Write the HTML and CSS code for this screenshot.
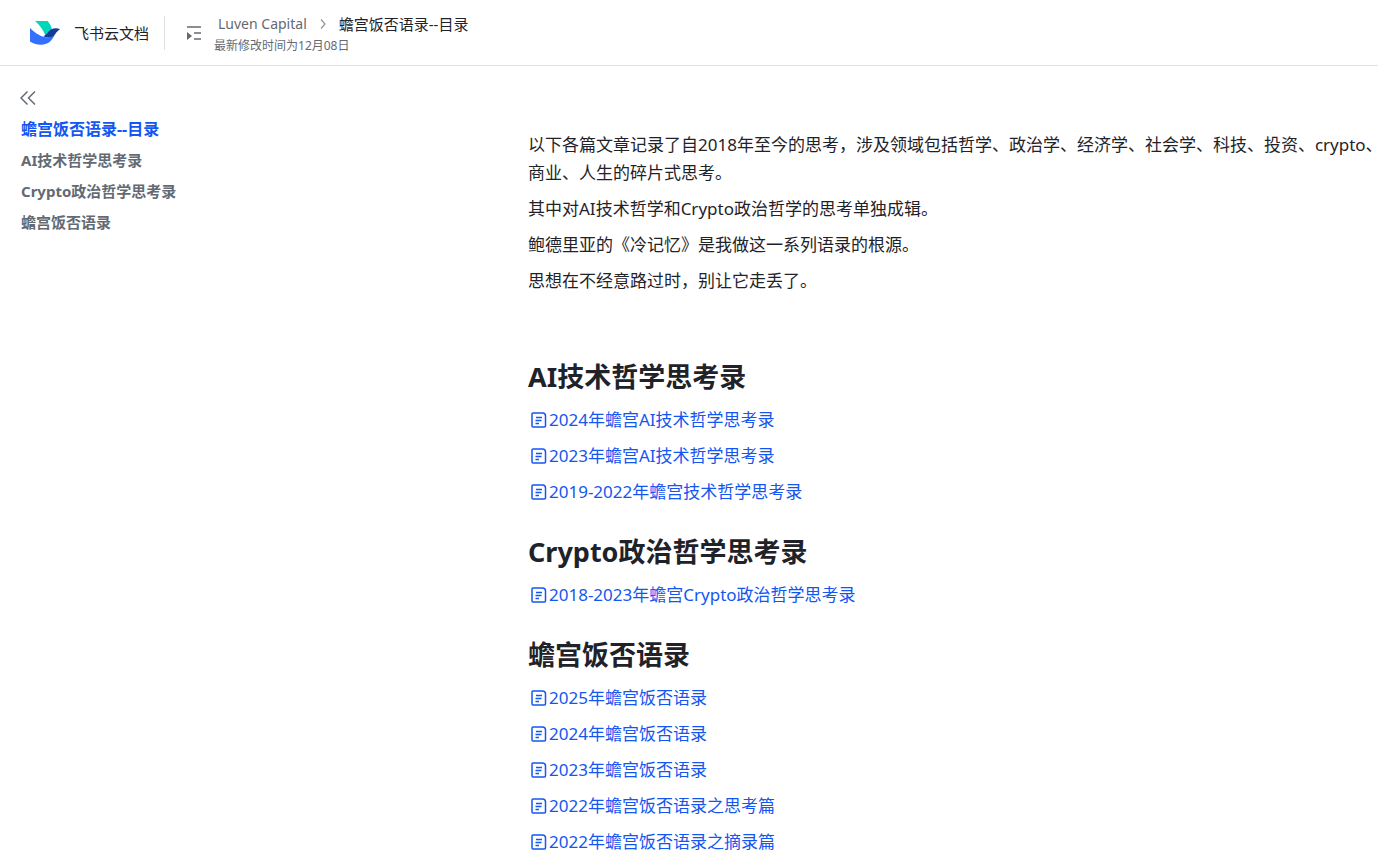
FILE: index.html
```html
<!DOCTYPE html>
<html lang="zh-CN">
<head>
    <meta charset="UTF-8">
    <meta name="viewport" content="width=device-width, initial-scale=1.0">
    <title>蟾宫饭否语录--目录</title>
    <link rel="stylesheet" href="styles.css">
</head>
<body>
    <!-- shared icon for the document links -->
    <svg class="sprite" aria-hidden="true">
        <symbol id="doc" viewBox="0 0 16 16">
            <path d="M2 1h9.500Q14.500 1 14.500 4v10q0 1-1 1H2q-1 0-1-1V2q0-1 1-1zM5 5.500h6M4.500 8.500h6M4.500 11.500h3.500" fill="none" stroke="currentColor" stroke-width="1.500" stroke-linejoin="round"/>
        </symbol>
    </svg>

    <header class="header">
        <a class="brand" href="#">
            <svg class="logo" viewBox="0 0 30 24" aria-hidden="true">
                <path d="M5 0h12.500c2 2 3.800 5 4.500 8.300L15.500 14.500C13 8.500 9.500 4 5 0z" fill="#00d6b9"/>
                <path d="M0 7c5.500 5.500 12 9.500 18 9.500 3 0 5-1 6.500-2.500C22 20 17.500 23.800 11 23.800 6.500 23.800 2.500 22.300 0 20.500z" fill="#3370ff"/>
                <path d="M30 8c-5.500-1.500-9.500-.5-13 4.500l-3.500 3c4.500 1.800 9 1.500 11.500-2C26.500 11 28 9.500 30 8z" fill="#133c9a"/>
            </svg>
            <span>飞书云文档</span>
        </a>
        <button class="icon-btn" aria-label="目录树">
            <svg width="16" height="16" viewBox="0 0 16 16" aria-hidden="true">
                <path d="M1 2h14M8 8h7M8 14h7" fill="none" stroke="currentColor" stroke-width="1.500"/>
                <path d="M1 7l5 4-5 4z" fill="currentColor"/>
            </svg>
        </button>
        <div class="info">
            <nav class="crumbs">
                <a class="parent" href="#">Luven Capital</a>
                <svg width="8" height="12" viewBox="0 0 8 12" aria-hidden="true">
                    <path d="M2 1.500L6 6l-4 4.500" fill="none" stroke="#8f959e" stroke-width="1.200"/>
                </svg>
                <span class="current">蟾宫饭否语录--目录</span>
            </nav>
            <div class="modified">最新修改时间为12月08日</div>
        </div>
    </header>

    <div class="layout">
        <aside class="sidebar">
            <button class="icon-btn" aria-label="收起目录">
                <svg width="16" height="16" viewBox="0 0 16 16" aria-hidden="true">
                    <path d="M7.500 1.500L1 8l6.500 6.500M15 1.500L8.500 8l6.500 6.500" fill="none" stroke="currentColor" stroke-width="1.500"/>
                </svg>
            </button>
            <nav class="toc">
                <a class="toc-title" href="#top">蟾宫饭否语录--目录</a>
                <a href="#ai">AI技术哲学思考录</a>
                <a href="#crypto">Crypto政治哲学思考录</a>
                <a href="#fanfou">蟾宫饭否语录</a>
            </nav>
        </aside>

        <main class="doc" id="top">
            <p>以下各篇文章记录了自2018年至今的思考，涉及领域包括哲学、政治学、经济学、社会学、科技、投资、crypto、商业、人生的碎片式思考。</p>
            <p>其中对AI技术哲学和Crypto政治哲学的思考单独成辑。</p>
            <p>鲍德里亚的《冷记忆》是我做这一系列语录的根源。</p>
            <p>思想在不经意路过时，别让它走丢了。</p>
            <p><br></p>

            <h2 id="ai">AI技术哲学思考录</h2>
            <p><a href="#"><svg class="doc-icon"><use href="#doc"/></svg>2024年蟾宫AI技术哲学思考录</a></p>
            <p><a href="#"><svg class="doc-icon"><use href="#doc"/></svg>2023年蟾宫AI技术哲学思考录</a></p>
            <p><a href="#"><svg class="doc-icon"><use href="#doc"/></svg>2019-2022年蟾宫技术哲学思考录</a></p>

            <h2 id="crypto">Crypto政治哲学思考录</h2>
            <p><a href="#"><svg class="doc-icon"><use href="#doc"/></svg>2018-2023年蟾宫Crypto政治哲学思考录</a></p>

            <h2 id="fanfou">蟾宫饭否语录</h2>
            <p><a href="#"><svg class="doc-icon"><use href="#doc"/></svg>2025年蟾宫饭否语录</a></p>
            <p><a href="#"><svg class="doc-icon"><use href="#doc"/></svg>2024年蟾宫饭否语录</a></p>
            <p><a href="#"><svg class="doc-icon"><use href="#doc"/></svg>2023年蟾宫饭否语录</a></p>
            <p><a href="#"><svg class="doc-icon"><use href="#doc"/></svg>2022年蟾宫饭否语录之思考篇</a></p>
            <p><a href="#"><svg class="doc-icon"><use href="#doc"/></svg>2022年蟾宫饭否语录之摘录篇</a></p>
        </main>
    </div>
</body>
</html>
```

FILE: styles.css
```css
* {
    box-sizing: border-box;
}

body {
    margin: 0;
    font-family: "Noto Sans", "Noto Sans CJK SC", sans-serif;
    font-size: 17px;
    color: #1f2329;
    background-color: #fff;
}

a {
    color: inherit;
    text-decoration: none;
}

svg {
    display: block;
    flex: none;
}

.sprite {
    display: none;
}

.icon-btn {
    display: flex;
    padding: 0;
    border: none;
    background: none;
    color: #646a73;
    cursor: pointer;
}

/* top bar */
.header {
    display: flex;
    align-items: center;
    height: 66px;
    padding-left: 30px;
    border-bottom: 1px solid #dee0e3;
}

.brand {
    display: flex;
    align-items: center;
    gap: 14px;
    height: 34px;
    margin-right: 21px;
    padding-right: 15px;
    border-right: 1px solid #dee0e3;
    font-size: 15px;
}

.logo {
    width: 30px;
    height: 24px;
}

.info {
    margin-left: 12px;
    padding-top: 4px;
}

.crumbs {
    display: flex;
    align-items: center;
    gap: 12px;
    padding-left: 4px;
    font-size: 15px;
    line-height: 22px;
    color: #646a73;
}

.parent {
    font-size: 14px;
}

.current {
    color: #1f2329;
}

.modified {
    font-size: 12px;
    line-height: 22px;
    color: #646a73;
}

/* table of contents + document */
.layout {
    display: flex;
    overflow: hidden;
}

.sidebar {
    flex: none;
    width: 528px;
    padding: 24px 20px 0;
}

.toc {
    display: flex;
    flex-direction: column;
    align-items: flex-start;
    gap: 7px;
    margin-top: 11px;
    padding-left: 1px;
    font-size: 15px;
    line-height: 24px;
    font-weight: bold;
    color: #646a73;
}

.toc-title {
    font-size: 16px;
    color: #1456f0;
}

.doc {
    flex: 1 0 860px;
    padding-top: 65px;
    line-height: 28px;
}

.doc p {
    margin: 0 0 8px;
}

.doc h2 {
    margin: 26px 0 10px;
    font-size: 27px;
    line-height: 39px;
}

.doc a {
    display: flex;
    align-items: center;
    gap: 2px;
    width: fit-content;
    padding-left: 3px;
    color: #1456f0;
}

.doc-icon {
    width: 16px;
    height: 16px;
}
```
